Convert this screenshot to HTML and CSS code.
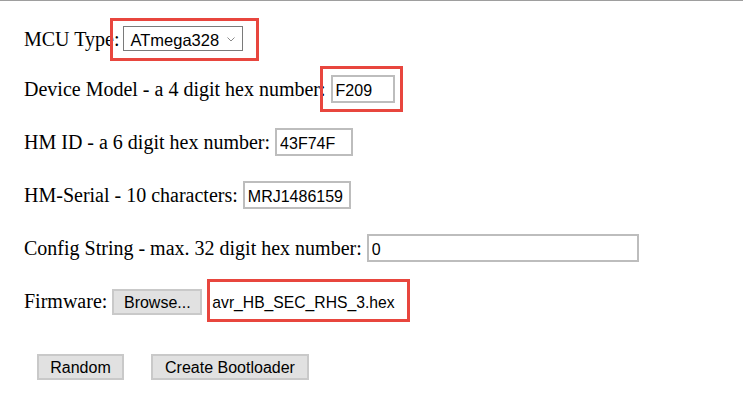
FILE: index.html
```html
<!DOCTYPE html>
<html lang="en">
<head>
<meta charset="utf-8">
<title>Bootloader Generator</title>
<link rel="stylesheet" href="styles.css">
</head>
<body>
<form class="page">
  <div class="row row-mcu">
    <label class="label" for="mcu">MCU Type:</label>
    <span class="select-wrap">
      <select id="mcu" class="select"><option>ATmega328</option></select>
      <svg class="chevron" width="8" height="5" viewBox="0 0 8 5"><polyline points="0.5,0.5 4,4 7.5,0.5" fill="none" stroke="#8a8a8a" stroke-width="1"/></svg>
    </span>
  </div>
  <div class="row row-model">
    <label class="label" for="model">Device Model - a 4 digit hex number:</label>
    <input id="model" class="field field-model" type="text" value="F209">
  </div>
  <div class="row">
    <label class="label" for="hmid">HM ID - a 6 digit hex number:</label>
    <input id="hmid" class="field field-hmid" type="text" value="43F74F">
  </div>
  <div class="row">
    <label class="label" for="serial">HM-Serial - 10 characters:</label>
    <input id="serial" class="field field-serial" type="text" value="MRJ1486159">
  </div>
  <div class="row">
    <label class="label" for="config">Config String - max. 32 digit hex number:</label>
    <input id="config" class="field field-config" type="text" value="0">
  </div>
  <div class="row row-firmware">
    <span class="label">Firmware:</span>
    <button type="button" class="btn btn-browse">Browse...</button>
    <span class="filename">avr_HB_SEC_RHS_3.hex</span>
  </div>
  <div class="row row-actions">
    <button type="button" class="btn btn-random">Random</button>
    <button type="button" class="btn btn-create">Create Bootloader</button>
  </div>

  <div class="mark mark-mcu"></div>
  <div class="mark mark-model"></div>
  <div class="mark mark-file"></div>
</form>
</body>
</html>
```

FILE: styles.css
```css
html, body {
  margin: 0;
  padding: 0;
  background: #ffffff;
}

body {
  width: 743px;
  height: 417px;
  overflow: hidden;
  font-family: "Liberation Serif", "Times New Roman", serif;
  font-size: 20px;
  color: #000000;
}

.page {
  position: relative;
  box-sizing: border-box;
  height: 417px;
  margin: 0;
  border-top: 1px solid #9e9e9e;
  padding: 25px 0 0 24px;
  display: flex;
  flex-direction: column;
  gap: 25px;
}

.row {
  display: flex;
  align-items: baseline;
  gap: 5px;
}

.row-model { margin-top: -1px; }
.row-firmware { margin-top: 2px; }
.row-actions {
  margin-top: 14px;
  padding-left: 13px;
  gap: 27px;
}

.label {
  font-family: "Liberation Serif", "Times New Roman", serif;
  font-size: 20px;
  white-space: nowrap;
}

.select-wrap {
  position: relative;
  display: inline-block;
  margin-left: -1px;
}

.select {
  appearance: none;
  -webkit-appearance: none;
  box-sizing: border-box;
  width: 120px;
  height: 25px;
  margin: 0;
  border: 1px solid #7a7a7a;
  border-radius: 0;
  background: #ffffff;
  padding: 2px 0 0 6px;
  font-family: "Liberation Sans", Arial, sans-serif;
  font-size: 16.5px;
  color: #000000;
}

.chevron {
  position: absolute;
  left: 104px;
  top: 11px;
  pointer-events: none;
}

.field {
  box-sizing: border-box;
  height: 28px;
  margin: 0;
  border: 2px solid #bdbdbd;
  border-radius: 0;
  padding: 3px 2px 0 3px;
  background: #ffffff;
  font-family: "Liberation Sans", Arial, sans-serif;
  font-size: 16px;
  color: #000000;
  outline: none;
}

.field-model { width: 64px; }
.field-hmid { width: 78px; }
.field-serial { width: 108px; }
.field-config { width: 272px; }

.btn {
  box-sizing: border-box;
  height: 26px;
  margin: 0;
  border: 2px solid #c9c9c9;
  border-radius: 0;
  background: #e1e1e1;
  padding: 2px 0 0 0;
  font-family: "Liberation Sans", Arial, sans-serif;
  font-size: 16px;
  color: #000000;
  text-align: center;
}

.btn-browse { width: 90px; }
.btn-random { width: 87px; }
.btn-create { width: 158px; }

.filename {
  margin-left: 5px;
  font-family: "Liberation Sans", Arial, sans-serif;
  font-size: 15.7px;
}

.mark {
  position: absolute;
  box-sizing: border-box;
  border: 3px solid #e8463e;
  pointer-events: none;
}

.mark-mcu {
  left: 110px;
  top: 17px;
  width: 149px;
  height: 43px;
}

.mark-model {
  left: 320px;
  top: 65px;
  width: 83px;
  height: 46px;
}

.mark-file {
  left: 207px;
  top: 278px;
  width: 203px;
  height: 43px;
}
```
